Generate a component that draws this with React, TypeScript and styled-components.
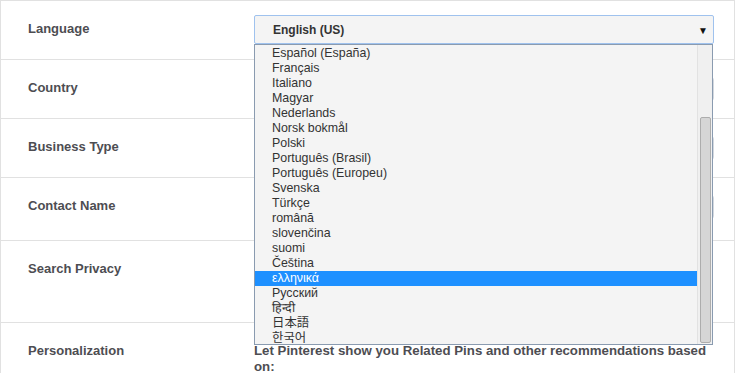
import React from 'react';
import styled, { createGlobalStyle } from 'styled-components';

const GlobalStyle = createGlobalStyle`
  body {
    margin: 0;
    background: #fff;
    font-family: "Liberation Sans", Arial, sans-serif;
  }
`;

const Panel = styled.div`
  width: 735px;
  box-sizing: border-box;
  border: 1px solid #e1e1e1;
  border-bottom: none;
  height: 373px;
  overflow: hidden;
`;

const Row = styled.div<{ $h: number }>`
  display: grid;
  grid-template-columns: 253px 461px;
  height: ${(p) => p.$h}px;
  border-bottom: 1px solid #e1e1e1;
`;

const Label = styled.div`
  padding: 20px 0 0 27px;
  font-size: 13px;
  line-height: 16px;
  font-weight: bold;
  color: #4d4d52;
`;

const Field = styled.div<{ $top: number }>`
  padding-top: ${(p) => p.$top}px;
  position: relative;
`;

const SelectWrap = styled.div`
  position: relative;
  width: 460px;
  z-index: 2;
`;

const SelectBox = styled.div`
  box-sizing: border-box;
  height: 29px;
  border: 1px solid #9fc2ee;
  border-radius: 2px;
  background: #f4f4f4;
  display: flex;
  align-items: center;
  justify-content: space-between;
  padding: 1px 5px 0 18px;
  font-size: 12px;
  font-weight: bold;
  color: #333;
`;

const Arrow = styled.span`
  font-size: 10px;
  color: #111;
`;

const List = styled.div`
  position: absolute;
  top: 29px;
  left: 0;
  width: 459px;
  height: 301px;
  box-sizing: border-box;
  border: 1px solid #8a9bb0;
  background: #f4f4f4;
  display: flex;
  overflow: hidden;
`;

const Options = styled.div`
  flex: 1;
  display: flex;
  flex-direction: column;
  padding-top: 1px;
`;

const Option = styled.div<{ $active?: boolean }>`
  flex: none;
  height: 15px;
  line-height: 15px;
  padding-left: 17px;
  font-size: 12.4px;
  color: ${(p) => (p.$active ? '#fff' : '#333')};
  background: ${(p) => (p.$active ? '#1e90ff' : 'transparent')};
  font-family: "Liberation Sans", Arial, "Noto Sans CJK JP", "Noto Sans CJK KR", sans-serif;
  white-space: nowrap;
`;

const Track = styled.div`
  width: 15px;
  box-sizing: border-box;
  border-left: 1px solid #e2e2e2;
  background: #f0f0f0;
  display: flex;
  flex-direction: column;
  justify-content: flex-end;
  align-items: center;
  padding-bottom: 1px;
`;

const Thumb = styled.div`
  width: 11px;
  height: 226px;
  box-sizing: border-box;
  border: 1px solid #adadad;
  border-radius: 2px;
  background: #d6d6d6;
`;

const Input = styled.div`
  width: 460px;
  height: 24px;
  box-sizing: border-box;
  border: 1px solid #d3d8df;
  border-radius: 3px;
  background: #fff;
`;

const Description = styled.div`
  font-size: 13.25px;
  line-height: 16px;
  font-weight: bold;
  color: #4d4d52;
  width: 462px;
`;

const languages = [
  'Español (España)',
  'Français',
  'Italiano',
  'Magyar',
  'Nederlands',
  'Norsk bokmål',
  'Polski',
  'Português (Brasil)',
  'Português (Europeu)',
  'Svenska',
  'Türkçe',
  'română',
  'slovenčina',
  'suomi',
  'Čeština',
  'ελληνικά',
  'Русский',
  'हिन्दी',
  '日本語',
  '한국어',
];

const App: React.FC = () => (
  <>
    <GlobalStyle />
    <Panel>
      <Row $h={58}>
        <Label>Language</Label>
        <Field $top={14}>
          <SelectWrap>
            <SelectBox>
              English (US)
              <Arrow>▼</Arrow>
            </SelectBox>
            <List>
              <Options>
                {languages.map((l) => (
                  <Option key={l} $active={l === 'ελληνικά'}>
                    {l}
                  </Option>
                ))}
              </Options>
              <Track>
                <Thumb />
              </Track>
            </List>
          </SelectWrap>
        </Field>
      </Row>
      <Row $h={58}>
        <Label>Country</Label>
        <Field $top={17}>
          <Input />
        </Field>
      </Row>
      <Row $h={58}>
        <Label>Business Type</Label>
        <Field $top={17}>
          <Input />
        </Field>
      </Row>
      <Row $h={62}>
        <Label>Contact Name</Label>
        <Field $top={17}>
          <Input />
        </Field>
      </Row>
      <Row $h={81}>
        <Label>Search Privacy</Label>
        <Field $top={19} />
      </Row>
      <Row $h={80}>
        <Label>Personalization</Label>
        <Field $top={20}>
          <Description>
            Let Pinterest show you Related Pins and other recommendations based on:
          </Description>
        </Field>
      </Row>
    </Panel>
  </>
);

export default App;
